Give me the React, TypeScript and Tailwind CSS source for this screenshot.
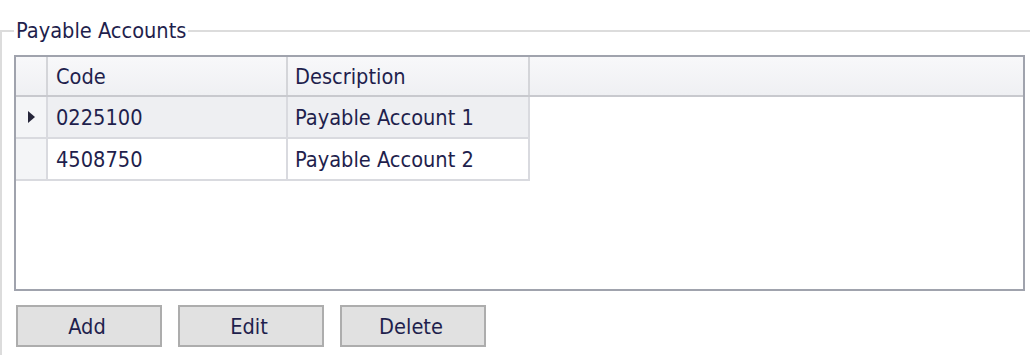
const rows = [
  { code: "0225100", description: "Payable Account 1", current: true },
  { code: "4508750", description: "Payable Account 2", current: false },
];

const buttons = ["Add", "Edit", "Delete"];

export default function App() {
  return (
    <div className="h-[355px] w-[1030px] overflow-hidden bg-white pt-[19px] font-['DejaVu_Sans_Condensed','Noto_Sans',sans-serif] text-[21.6px] text-[#1f1f4d]">
      <fieldset className="w-[1060px] border-t-2 border-l-2 border-[#dcdcdc] pl-[12px] pb-10">
        <legend className="px-[2px] leading-[24px]">Payable Accounts</legend>

        {/* grid */}
        <div className="mt-[12px] flex h-[236px] w-[1011px] flex-col border-2 border-[#a0a3ad] bg-white">
          <div className="flex h-[40px] shrink-0 border-b-2 border-[#c8c9ce] bg-linear-to-b from-[#f8f8fa] to-[#eff0f3]">
            <div className="w-[32px] border-r-2 border-[#d4d5d9]" />
            <div className="flex w-[240px] items-center border-r-2 border-[#d4d5d9] pt-[2px] pl-[8px]">Code</div>
            <div className="flex w-[242px] items-center border-r-2 border-[#d4d5d9] pt-[2px] pl-[7px]">Description</div>
            <div className="flex-1" />
          </div>

          {rows.map((r) => (
            <div key={r.code} className="flex h-[42px] shrink-0">
              <div className="flex w-[32px] items-center justify-center border-r-2 border-b-2 border-[#d9dadf] bg-[#f4f5f7]">
                {r.current && (
                  <svg width="7" height="12" viewBox="0 0 7 12">
                    <path d="M0 0 L7 6 L0 12 Z" fill="#26263a" />
                  </svg>
                )}
              </div>
              <div
                className={`flex w-[240px] items-center border-r-2 border-b-2 border-[#d9dadf] pt-[2px] pl-[8px] ${
                  r.current ? "bg-[#eeeff2]" : "bg-white"
                }`}
              >
                {r.code}
              </div>
              <div
                className={`flex w-[242px] items-center border-r-2 border-b-2 border-[#d9dadf] pt-[2px] pl-[7px] ${
                  r.current ? "bg-[#eeeff2]" : "bg-white"
                }`}
              >
                {r.description}
              </div>
            </div>
          ))}
        </div>

        <div className="mt-[14px] ml-[2px] flex gap-4">
          {buttons.map((b) => (
            <button
              key={b}
              className="flex h-[42px] w-[146px] items-center justify-center border-2 border-[#adadad] bg-[#e1e1e1] pt-[2px] pr-1"
            >
              {b}
            </button>
          ))}
        </div>
      </fieldset>
    </div>
  );
}
